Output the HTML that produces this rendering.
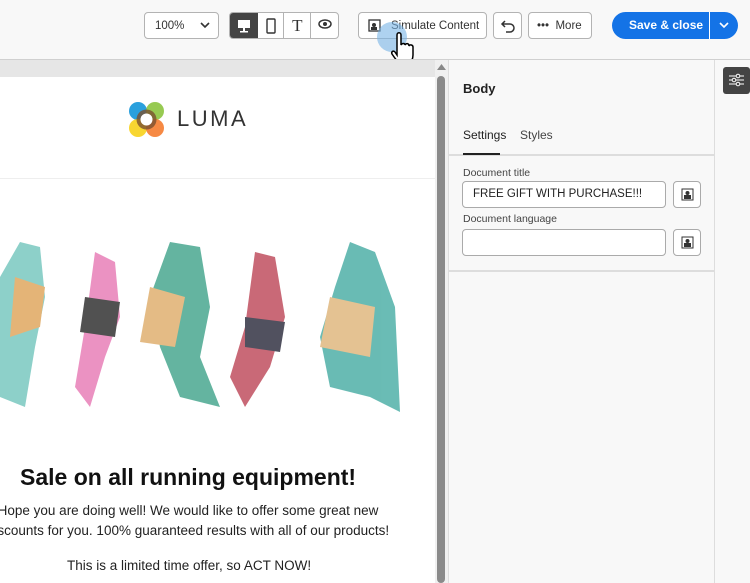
<!DOCTYPE html>
<html><head><style>
*{box-sizing:border-box;margin:0;padding:0}
body{width:750px;height:583px;overflow:hidden;background:#f8f8f8;font-family:"Liberation Sans",sans-serif;position:relative;color:#222}
.a{position:absolute}
.btn{position:absolute;top:12px;height:27px;border:1px solid #b3b3b3;border-radius:4px;background:#fff;font-size:11.5px;color:#333;display:flex;align-items:center}
</style></head><body>
<!-- top bar -->
<div class="btn" style="left:144px;width:75px;padding-left:10px">100%<svg class="a" style="left:55px;top:9px" width="10" height="7"><path d="M1 1l4 4 4-4" stroke="#333" stroke-width="1.6" fill="none"/></svg></div>
<div class="btn" style="left:229px;width:110px;overflow:hidden">
 <div style="width:28px;height:100%;background:#444;display:flex;align-items:center;justify-content:center"><svg width="14" height="14"><rect x="1" y="1" width="12" height="8" fill="#fff"/><rect x="6" y="9" width="2" height="3" fill="#fff"/><rect x="3" y="12" width="8" height="1.5" fill="#fff"/></svg></div>
 <div style="width:27px;height:100%;border-right:1px solid #b3b3b3;display:flex;align-items:center;justify-content:center"><svg width="10" height="16"><rect x="1" y="1" width="8" height="14" rx="1" fill="none" stroke="#333" stroke-width="1.4"/></svg></div>
 <div style="width:27px;height:100%;border-right:1px solid #b3b3b3;text-align:center;font:17px 'Liberation Serif',serif;line-height:25px">T</div>
 <div style="width:27px;text-align:center"><svg width="14" height="10"><ellipse cx="7" cy="5" rx="6" ry="4" fill="none" stroke="#333" stroke-width="1.5"/><circle cx="7" cy="5" r="2" fill="#333"/></svg></div>
</div>
<div class="btn" style="left:358px;width:129px;padding-left:32px"><svg class="a" style="left:9px;top:6px" width="14" height="14"><rect x="1" y="1" width="11" height="11" fill="none" stroke="#333" stroke-width="1.3"/><circle cx="6" cy="6" r="2" fill="#333"/><rect x="3" y="8" width="6" height="3" fill="#333"/></svg>Simulate Content</div>
<div class="btn" style="left:493px;width:29px;justify-content:center"><svg width="16" height="14"><path d="M5 2L2 5l3 3M2 5h8a4 4 0 010 8H6" stroke="#333" stroke-width="1.5" fill="none"/></svg></div>
<div class="btn" style="left:528px;width:64px;padding-left:8px">•••&nbsp;&nbsp;More</div>
<div class="a" style="left:612px;top:12px;width:126px;height:27px;background:#1473e6;border-radius:14px;color:#fff;font-weight:bold;font-size:12px;line-height:27px;padding-left:17px">Save &amp; close</div>
<div class="a" style="left:709px;top:12px;width:1px;height:27px;background:#fff"></div>
<svg class="a" style="left:719px;top:22px" width="10" height="7"><path d="M1 1l4 4 4-4" stroke="#fff" stroke-width="1.6" fill="none"/></svg>
<div class="a" style="left:377px;top:22px;width:30px;height:30px;border-radius:50%;background:rgba(120,180,230,.6)"></div>
<svg class="a" style="left:390px;top:32px" width="26" height="34"><path d="M7 3c0-3 4-3 4 0v10c1-2 4-2 4 0c1-2 4-2 4 1c1-2 4-1 4 1v8c0 4-2 8-4 9h-9c-2-2-6-7-8-10c-1-2 1-4 3-2l2 3z" fill="#fff" stroke="#000" stroke-width="1.5"/></svg>
<div class="a" style="left:0;top:59px;width:750px;height:1px;background:#d0d0d0"></div>
<!-- canvas -->
<div class="a" style="left:0;top:60px;width:435px;height:17px;background:#e6e6e6"></div>
<div class="a" style="left:0;top:77px;width:435px;height:506px;background:#fff;overflow:hidden">
 <svg class="a" style="left:128px;top:24px" width="38" height="38"><circle cx="10" cy="10" r="9" fill="#2aa0dd"/><circle cx="27" cy="10" r="9" fill="#8cc43f" opacity=".9"/><circle cx="10" cy="27" r="9" fill="#f7d11b" opacity=".9"/><circle cx="27" cy="27" r="9" fill="#f57c30" opacity=".9"/><circle cx="18.5" cy="18.5" r="10" fill="#7a5030" opacity=".8"/><circle cx="18.5" cy="18.5" r="6" fill="#fff"/></svg>
 <div class="a" style="left:177px;top:29px;font-size:22px;letter-spacing:2.5px;color:#333">LUMA</div>
 <div class="a" style="left:0;top:101px;width:435px;height:1px;background:#eee"></div>
 <svg class="a" style="left:0;top:160px" width="435" height="180">
  <g opacity=".85">
  <polygon points="20,5 40,10 45,60 35,110 25,170 0,160 0,40" fill="#7ac8c0"/>
  <polygon points="15,40 45,50 40,90 10,100" fill="#e0a860"/>
  <polygon points="95,15 115,25 120,80 105,120 90,170 75,150 85,90" fill="#e880b8"/>
  <polygon points="85,60 120,65 115,100 80,95" fill="#333"/>
  <polygon points="170,5 200,10 210,70 200,120 220,170 180,160 160,110 150,60" fill="#4aa890"/>
  <polygon points="150,50 185,60 175,110 140,105" fill="#e0b070"/>
  <polygon points="255,15 275,20 285,80 270,130 245,170 230,140 245,90" fill="#c05060"/>
  <polygon points="245,80 285,85 280,115 245,110" fill="#334"/>
  <polygon points="350,5 375,15 395,70 400,175 370,160 330,150 320,100 335,50" fill="#50b0a8"/>
  <polygon points="330,60 375,70 370,120 320,110" fill="#e0b880"/>
  </g>
 </svg>
 <div class="a" style="left:20px;top:387px;font-size:23px;font-weight:bold;color:#111;white-space:nowrap">Sale on all running equipment!</div>
 <div class="a" style="left:-112px;top:424px;width:600px;text-align:center;font-size:13.5px;line-height:20px;color:#222;white-space:nowrap">Hope you are doing well! We would like to offer some great new<br>discounts for you. 100% guaranteed results with all of our products!</div>
 <div class="a" style="left:67px;top:481px;font-size:13.5px;color:#222;white-space:nowrap">This is a limited time offer, so ACT NOW!</div>
</div>
<div class="a" style="left:435px;top:60px;width:13px;height:523px;background:#f0f0f0"></div>
<svg class="a" style="left:437px;top:64px" width="9" height="7"><path d="M0 6L4.5 0 9 6z" fill="#888"/></svg>
<div class="a" style="left:437px;top:76px;width:8px;height:507px;background:#8a8a8a;border-radius:4px"></div>
<!-- right panel -->
<div class="a" style="left:448px;top:60px;width:267px;height:523px;background:#f8f8f8;border-left:1px solid #ddd;border-right:1px solid #ddd"></div>
<div class="a" style="left:463px;top:81px;font-size:13px;font-weight:bold">Body</div>
<div class="a" style="left:463px;top:128px;font-size:12px;color:#222">Settings</div>
<div class="a" style="left:520px;top:128px;font-size:12px;color:#444">Styles</div>
<div class="a" style="left:449px;top:154px;width:265px;height:2px;background:#ddd"></div>
<div class="a" style="left:463px;top:153px;width:37px;height:2px;background:#222"></div>
<div class="a" style="left:463px;top:167px;font-size:10.5px;color:#444">Document title</div>
<div class="a" style="left:462px;top:181px;width:204px;height:27px;border:1px solid #aaa;border-radius:4px;background:#fff;font-size:11.5px;padding-left:10px;line-height:25px">FREE GIFT WITH PURCHASE!!!</div>
<div class="a" style="left:463px;top:213px;font-size:10.5px;color:#444">Document language</div>
<div class="a" style="left:462px;top:229px;width:204px;height:27px;border:1px solid #aaa;border-radius:4px;background:#fff"></div>
<div class="a" style="left:673px;top:181px;width:28px;height:27px;border:1px solid #aaa;border-radius:4px;background:#fff"><svg style="margin:6px 7px" width="13" height="13"><rect x="1" y="1" width="11" height="11" fill="none" stroke="#333"/><circle cx="6.5" cy="5" r="2" fill="#333"/><rect x="3" y="7" width="7" height="4" fill="#333"/></svg></div>
<div class="a" style="left:673px;top:229px;width:28px;height:27px;border:1px solid #aaa;border-radius:4px;background:#fff"><svg style="margin:6px 7px" width="13" height="13"><rect x="1" y="1" width="11" height="11" fill="none" stroke="#333"/><circle cx="6.5" cy="5" r="2" fill="#333"/><rect x="3" y="7" width="7" height="4" fill="#333"/></svg></div>
<div class="a" style="left:449px;top:270px;width:265px;height:2px;background:#ddd"></div>
<div class="a" style="left:723px;top:67px;width:27px;height:27px;background:#444;border-radius:3px"><svg style="margin:6px 6px" width="15" height="14"><path d="M0 3h15M0 7h15M0 11h15" stroke="#fff" stroke-width="1"/><circle cx="9" cy="3" r="1.8" fill="#444" stroke="#fff"/><circle cx="5" cy="7" r="1.8" fill="#444" stroke="#fff"/><circle cx="9" cy="11" r="1.8" fill="#444" stroke="#fff"/></svg></div>
</body></html>
